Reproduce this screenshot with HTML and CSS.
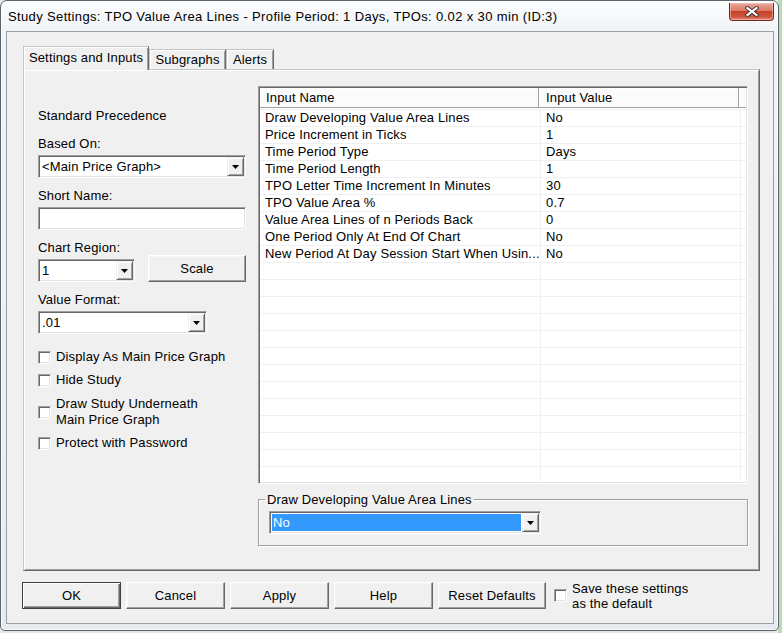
FILE: index.html
```html
<!DOCTYPE html>
<html lang="en">
<head>
    <meta charset="UTF-8">
    <title>Study Settings</title>
    <link rel="stylesheet" href="styles.css">
</head>
<body>

<div class="window">
    <div class="titlebar">
        <div class="title">Study Settings: TPO Value Area Lines - Profile Period: 1 Days, TPOs: 0.02 x 30 min (ID:3)</div>
        <div class="close">
            <svg width="14" height="11" viewBox="0 0 14 11">
                <path d="M2.5 2 L11.5 9 M11.5 2 L2.5 9" stroke="#3b2b2b" stroke-width="4" stroke-linecap="square"/>
                <path d="M2.5 2 L11.5 9 M11.5 2 L2.5 9" stroke="#ffffff" stroke-width="2.2" stroke-linecap="square"/>
            </svg>
        </div>
    </div>

    <div class="client">
        <div class="tabs">
            <div class="tab active" style="width: 126px">Settings and Inputs</div>
            <div class="tab" style="width: 77px">Subgraphs</div>
            <div class="tab" style="width: 48px">Alerts</div>
        </div>

        <div class="tab-page">
            <!-- left column -->
            <div class="left-col">
                <div class="label first">Standard Precedence</div>

                <div class="label">Based On:</div>
                <div class="combo">
                    <div class="combo-text">&lt;Main Price Graph&gt;</div>
                    <div class="drop"><svg width="7" height="4" viewBox="0 0 7 4"><polygon points="0,0 7,0 3.5,4" fill="#000"/></svg></div>
                </div>

                <div class="label">Short Name:</div>
                <div class="textbox"></div>

                <div class="label">Chart Region:</div>
                <div class="region-row">
                    <div class="combo small">
                        <div class="combo-text">1</div>
                        <div class="drop"><svg width="7" height="4" viewBox="0 0 7 4"><polygon points="0,0 7,0 3.5,4" fill="#000"/></svg></div>
                    </div>
                    <div class="btn scale">Scale</div>
                </div>

                <div class="label">Value Format:</div>
                <div class="combo format">
                    <div class="combo-text">.01</div>
                    <div class="drop"><svg width="7" height="4" viewBox="0 0 7 4"><polygon points="0,0 7,0 3.5,4" fill="#000"/></svg></div>
                </div>

                <div class="check first-check"><span class="box"></span><span>Display As Main Price Graph</span></div>
                <div class="check"><span class="box"></span><span>Hide Study</span></div>
                <div class="check two-line"><span class="box"></span><span>Draw Study Underneath<br>Main Price Graph</span></div>
                <div class="check"><span class="box"></span><span>Protect with Password</span></div>
            </div>

            <!-- right column -->
            <div class="right-col">
                <div class="listview">
                    <div class="lv-header">
                        <div class="lv-hcell c1">Input Name</div>
                        <div class="lv-hcell c2">Input Value</div>
                        <div class="lv-hcell c3"></div>
                    </div>
                    <div class="lv-body">
                        <div class="lv-row"><div class="lv-cell c1">Draw Developing Value Area Lines</div><div class="lv-cell c2">No</div><div class="lv-cell c3"></div></div>
                        <div class="lv-row"><div class="lv-cell c1">Price Increment in Ticks</div><div class="lv-cell c2">1</div><div class="lv-cell c3"></div></div>
                        <div class="lv-row"><div class="lv-cell c1">Time Period Type</div><div class="lv-cell c2">Days</div><div class="lv-cell c3"></div></div>
                        <div class="lv-row"><div class="lv-cell c1">Time Period Length</div><div class="lv-cell c2">1</div><div class="lv-cell c3"></div></div>
                        <div class="lv-row"><div class="lv-cell c1">TPO Letter Time Increment In Minutes</div><div class="lv-cell c2">30</div><div class="lv-cell c3"></div></div>
                        <div class="lv-row"><div class="lv-cell c1">TPO Value Area %</div><div class="lv-cell c2">0.7</div><div class="lv-cell c3"></div></div>
                        <div class="lv-row"><div class="lv-cell c1">Value Area Lines of n Periods Back</div><div class="lv-cell c2">0</div><div class="lv-cell c3"></div></div>
                        <div class="lv-row"><div class="lv-cell c1">One Period Only At End Of Chart</div><div class="lv-cell c2">No</div><div class="lv-cell c3"></div></div>
                        <div class="lv-row"><div class="lv-cell c1">New Period At Day Session Start When Usin...</div><div class="lv-cell c2">No</div><div class="lv-cell c3"></div></div>
                        <div class="lv-row"><div class="lv-cell c1"></div><div class="lv-cell c2"></div><div class="lv-cell c3"></div></div>
                        <div class="lv-row"><div class="lv-cell c1"></div><div class="lv-cell c2"></div><div class="lv-cell c3"></div></div>
                        <div class="lv-row"><div class="lv-cell c1"></div><div class="lv-cell c2"></div><div class="lv-cell c3"></div></div>
                        <div class="lv-row"><div class="lv-cell c1"></div><div class="lv-cell c2"></div><div class="lv-cell c3"></div></div>
                        <div class="lv-row"><div class="lv-cell c1"></div><div class="lv-cell c2"></div><div class="lv-cell c3"></div></div>
                        <div class="lv-row"><div class="lv-cell c1"></div><div class="lv-cell c2"></div><div class="lv-cell c3"></div></div>
                        <div class="lv-row"><div class="lv-cell c1"></div><div class="lv-cell c2"></div><div class="lv-cell c3"></div></div>
                        <div class="lv-row"><div class="lv-cell c1"></div><div class="lv-cell c2"></div><div class="lv-cell c3"></div></div>
                        <div class="lv-row"><div class="lv-cell c1"></div><div class="lv-cell c2"></div><div class="lv-cell c3"></div></div>
                        <div class="lv-row"><div class="lv-cell c1"></div><div class="lv-cell c2"></div><div class="lv-cell c3"></div></div>
                        <div class="lv-row"><div class="lv-cell c1"></div><div class="lv-cell c2"></div><div class="lv-cell c3"></div></div>
                        <div class="lv-row"><div class="lv-cell c1"></div><div class="lv-cell c2"></div><div class="lv-cell c3"></div></div>
                        <div class="lv-row"><div class="lv-cell c1"></div><div class="lv-cell c2"></div><div class="lv-cell c3"></div></div>
                    </div>
                </div>

                <fieldset class="group">
                    <legend>Draw Developing Value Area Lines</legend>
                    <div class="combo selected">
                        <div class="combo-text"><span class="sel">No</span></div>
                        <div class="drop"><svg width="7" height="4" viewBox="0 0 7 4"><polygon points="0,0 7,0 3.5,4" fill="#000"/></svg></div>
                    </div>
                </fieldset>
            </div>
        </div>

        <div class="actions">
            <div class="btn default">OK</div>
            <div class="btn">Cancel</div>
            <div class="btn">Apply</div>
            <div class="btn">Help</div>
            <div class="btn reset">Reset Defaults</div>
            <div class="check save"><span class="box"></span><span>Save these settings<br>as the default</span></div>
        </div>
    </div>
</div>

</body>
</html>
```

FILE: styles.css
```css
/* Base */
* {
    margin: 0;
    padding: 0;
    box-sizing: border-box;
}

body {
    width: 782px;
    height: 633px;
    overflow: hidden;
    background: linear-gradient(to right, #e4e6e8 0, #e4e6e8 778px, #b8dcb4 778px);
    font-family: "Liberation Sans", Arial, sans-serif;
    font-size: 13px;
    letter-spacing: 0.15px;
    color: #000;
}

/* Window frame */
.window {
    width: 779px;
    height: 631px;
    border: 1px solid #5d636b;
    border-radius: 7px 7px 5px 5px;
    background: linear-gradient(to bottom, #fbfcfd 0, #f1f4f7 30px, #e7ebf0 100%);
    box-shadow: inset 0 0 0 1px rgba(255, 255, 255, 0.8);
    padding: 0 4px 6px 5px;
    display: flex;
    flex-direction: column;
}

.titlebar {
    height: 30px;
    display: flex;
    justify-content: space-between;
    align-items: flex-start;
}

.title {
    padding: 8px 0 0 2px;
    font-size: 13px;
    line-height: 15px;
    letter-spacing: 0.36px;
    white-space: nowrap;
}

.close {
    width: 45px;
    height: 18px;
    margin-top: 2px;
    border: 1px solid #6b2a20;
    border-top: none;
    border-radius: 0 0 4px 4px;
    background: linear-gradient(to bottom, #e9a99b 0, #dc7a66 45%, #c4402a 50%, #d0553d 80%, #e28a74 100%);
    box-shadow: inset 0 0 0 1px rgba(255, 210, 200, 0.5);
    display: flex;
    align-items: center;
    justify-content: center;
}

/* Client area */
.client {
    flex: 1;
    border: 1px solid #98a0a8;
    background: #f0f0f0;
    padding: 14px 13px 0 16px;
}

.tabs {
    height: 23px;
    display: flex;
    align-items: flex-end;
    position: relative;
    z-index: 1;
}

.tab {
    height: 20px;
    padding-top: 2px;
    line-height: 15px;
    text-align: center;
    white-space: nowrap;
    background: #f0f0f0;
    border: 1px solid;
    border-color: #c4c4c4 #6a6a6a transparent #c4c4c4;
    border-bottom: none;
    box-shadow: inset 1px 1px #fff, inset -1px 0 #a0a0a0;
}

.tab.active {
    height: 24px;
    padding-top: 3px;
    margin-bottom: -1px;
}

.tab-page {
    height: 502px;
    display: flex;
    gap: 12px;
    padding: 0 11px 0 14px;
    border: 1px solid;
    border-color: #c4c4c4 #6a6a6a #6a6a6a #c4c4c4;
    box-shadow: inset 1px 1px #fff, inset -1px -1px #a0a0a0;
}

/* Left column */
.left-col {
    width: 208px;
    display: flex;
    flex-direction: column;
    align-items: flex-start;
}

.label {
    line-height: 15px;
    margin-top: 10px;
    margin-bottom: 4px;
    white-space: nowrap;
}

.label.first {
    margin-top: 38px;
    margin-bottom: 13px;
}

.label.first + .label {
    margin-top: 0;
}

.combo,
.textbox {
    width: 208px;
    height: 23px;
    background: #fff;
    border: 1px solid;
    border-color: #a0a0a0 #fff #fff #a0a0a0;
    box-shadow: inset 1px 1px #696969, inset -1px -1px #e3e3e3;
    padding: 1px;
}

.combo {
    display: flex;
}

.combo-text {
    flex: 1;
    line-height: 19px;
    padding-left: 2px;
    white-space: nowrap;
    overflow: hidden;
}

.drop {
    width: 17px;
    height: 19px;
    background: #f0f0f0;
    border: 1px solid;
    border-color: #f0f0f0 #696969 #696969 #f0f0f0;
    box-shadow: inset 1px 1px #fff, inset -1px -1px #a0a0a0;
    display: flex;
    align-items: center;
    justify-content: center;
}

.region-row {
    width: 208px;
    display: flex;
    justify-content: space-between;
    align-items: flex-end;
    margin-top: -4px;
}

.combo.small {
    width: 97px;
}

.combo.format {
    width: 169px;
}

.btn {
    width: 99px;
    height: 27px;
    line-height: 25px;
    text-align: center;
    white-space: nowrap;
    background: #f0f0f0;
    border: 1px solid;
    border-color: #fff #696969 #696969 #fff;
    box-shadow: inset -1px -1px #a0a0a0, inset 1px 1px #f6f6f6;
}

.btn.scale {
    width: 98px;
}

.btn.default {
    border-color: #404040;
    box-shadow: inset 1px 1px #fff, inset -1px -1px #696969, inset -2px -2px #a0a0a0;
}

.btn.reset {
    width: 108px;
}

/* Checkboxes */
.check {
    display: flex;
    align-items: center;
    gap: 5px;
    line-height: 16px;
    margin-top: 7px;
    white-space: nowrap;
}

.check.first-check {
    margin-top: 15px;
}

.check.two-line {
    margin-top: 8px;
}

.check .box {
    width: 13px;
    height: 13px;
    flex: none;
    background: #fff;
    border: 1px solid;
    border-color: #a0a0a0 #fff #fff #a0a0a0;
    box-shadow: inset 1px 1px #696969, inset -1px -1px #e3e3e3;
}

/* List view */
.right-col {
    flex: 1;
    display: flex;
    flex-direction: column;
}

.listview {
    margin-top: 16px;
    height: 398px;
    background: #fff;
    border: 1px solid;
    border-color: #a0a0a0 #fff #fff #a0a0a0;
    box-shadow: inset 1px 1px #696969, inset -1px -1px #e3e3e3;
    padding: 1px;
    overflow: hidden;
}

.lv-header {
    display: flex;
    height: 20px;
}

.lv-hcell {
    height: 20px;
    padding-top: 1px;
    line-height: 18px;
    background: #fbfbfb;
    border-right: 1px solid #a0a0a0;
    border-bottom: 1px solid #a0a0a0;
    box-shadow: inset 1px 1px #fff;
    white-space: nowrap;
}

.lv-hcell.c1 {
    width: 279px;
    padding-left: 6px;
}

.lv-hcell.c2 {
    width: 200px;
    padding-left: 7px;
}

.lv-hcell.c3 {
    flex: 1;
    border-right: none;
}

.lv-body {
    margin-top: 1px;
    border-top: 1px solid #f0f0f0;
}

.lv-row {
    display: flex;
    height: 17px;
    border-bottom: 1px solid #f0f0f0;
}

.lv-cell {
    line-height: 16px;
    white-space: nowrap;
    overflow: hidden;
    border-right: 1px solid #f0f0f0;
}

.lv-cell.c1 {
    width: 281px;
    padding-left: 5px;
}

.lv-cell.c2 {
    width: 200px;
    padding-left: 5px;
}

.lv-cell.c3 {
    flex: 1;
    border-right: none;
}

/* Group box */
.group {
    margin-top: 8px;
    padding: 4px 0 11px 10px;
    border: 1px solid #a0a0a0;
    box-shadow: 1px 1px 0 #fff, inset 1px 1px 0 #fff;
}

.group legend {
    margin-left: -4px;
    padding: 0 2px;
    line-height: 15px;
}

.combo.selected {
    width: 272px;
}

.combo.selected .combo-text {
    padding: 1px;
}

.sel {
    display: block;
    height: 17px;
    line-height: 17px;
    padding-left: 1px;
    background: #3399ff;
    color: #fff;
}

/* Bottom buttons */
.actions {
    display: flex;
    align-items: center;
    gap: 5px;
    margin-top: 11px;
    margin-left: -1px;
}

.check.save {
    height: 27px;
    margin-top: 0;
    margin-left: 3px;
    line-height: 15px;
}
```
